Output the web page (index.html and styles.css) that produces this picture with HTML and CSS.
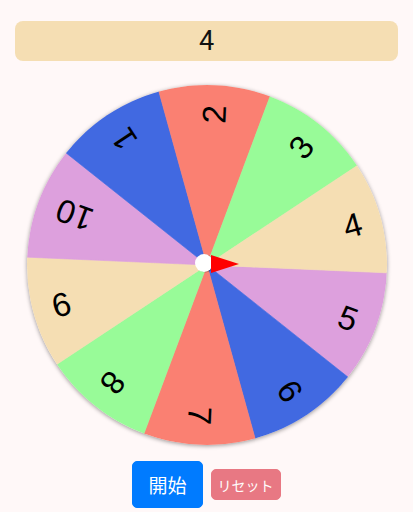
FILE: index.html
```html
<!DOCTYPE html>
<html lang="ja">
<head>
    <meta charset="UTF-8">
    <meta name="viewport" content="width=device-width, initial-scale=1.0">
    <title>ルーレット</title>
    <link rel="stylesheet" href="styles.css">
</head>
<body>
    <div class="container">
        <div class="result" id="result">4</div>

        <div class="wheel-wrap">
            <svg class="wheel" viewBox="0 0 360 360" width="360" height="360">
                <defs>
                    <path id="slice" d="M180 180 L360 180 A180 180 0 0 1 325.62 285.80 Z"/>
                </defs>
                <use href="#slice" class="plum" transform="rotate(2.5 180 180)"/>
                <use href="#slice" class="blue" transform="rotate(38.5 180 180)"/>
                <use href="#slice" class="salmon" transform="rotate(74.5 180 180)"/>
                <use href="#slice" class="green" transform="rotate(110.5 180 180)"/>
                <use href="#slice" class="wheat" transform="rotate(146.5 180 180)"/>
                <use href="#slice" class="plum" transform="rotate(182.5 180 180)"/>
                <use href="#slice" class="blue" transform="rotate(218.5 180 180)"/>
                <use href="#slice" class="salmon" transform="rotate(254.5 180 180)"/>
                <use href="#slice" class="green" transform="rotate(290.5 180 180)"/>
                <use href="#slice" class="wheat" transform="rotate(326.5 180 180)"/>

                <text x="340" y="192" transform="rotate(20.5 180 180)">5</text>
                <text x="340" y="192" transform="rotate(56.5 180 180)">6</text>
                <text x="340" y="192" transform="rotate(92.5 180 180)">7</text>
                <text x="340" y="192" transform="rotate(128.5 180 180)">8</text>
                <text x="340" y="192" transform="rotate(164.5 180 180)">9</text>
                <text x="340" y="192" transform="rotate(200.5 180 180)">10</text>
                <text x="340" y="192" transform="rotate(236.5 180 180)">1</text>
                <text x="340" y="192" transform="rotate(272.5 180 180)">2</text>
                <text x="340" y="192" transform="rotate(308.5 180 180)">3</text>
                <text x="340" y="192" transform="rotate(344.5 180 180)">4</text>
            </svg>

            <svg class="pointer" viewBox="0 0 360 360" width="360" height="360">
                <circle cx="178.5" cy="178.5" r="9" fill="rgba(0,0,0,0.25)"/>
                <circle cx="177" cy="178" r="9" fill="#ffffff"/>
                <polygon points="184,170 184,188 212,179" fill="#ff0000"/>
            </svg>
        </div>

        <div class="buttons">
            <button class="btn start">開始</button>
            <button class="btn reset" disabled>リセット</button>
        </div>
    </div>
</body>
</html>
```

FILE: styles.css
```css
body { margin: 0; background: #fff8f8; font-family: "Noto Sans CJK JP", "Noto Sans", sans-serif; }
.container { padding: 21px 15px 0; }
.result { height: 40px; background: #f5deb3; border-radius: 8px; display: flex; align-items: center; justify-content: center; font-family: Roboto, "Noto Sans", sans-serif; font-size: 27px; color: #111; }

.wheel-wrap { position: relative; width: 360px; height: 360px; margin: 24px auto 0; }
.wheel { display: block; border-radius: 50%; box-shadow: 0 1px 4px rgba(0, 0, 0, 0.4); }
.wheel text { font-family: "Liberation Sans", Arial, sans-serif; font-size: 33px; text-anchor: end; fill: #000; }
.pointer { position: absolute; left: 0; top: 0; pointer-events: none; }

.plum { fill: #dda0dd; stroke: #dda0dd; stroke-width: 0.6; }
.blue { fill: #4169e1; stroke: #4169e1; stroke-width: 0.6; }
.salmon { fill: #fa8072; stroke: #fa8072; stroke-width: 0.6; }
.green { fill: #98fb98; stroke: #98fb98; stroke-width: 0.6; }
.wheat { fill: #f5deb3; stroke: #f5deb3; stroke-width: 0.6; }

.buttons { display: flex; justify-content: center; align-items: center; gap: 8px; margin-top: 16px; }
.btn { border: 1px solid transparent; color: #fff; border-radius: 5px; font-family: inherit; cursor: pointer; }
.start { background: #007bff; border-color: #007bff; font-size: 19px; height: 47px; padding: 0 15px; }
.reset { background: #dc3545; border-color: #dc3545; opacity: 0.65; font-size: 14px; height: 31px; padding: 0 6px; cursor: default; }
```
